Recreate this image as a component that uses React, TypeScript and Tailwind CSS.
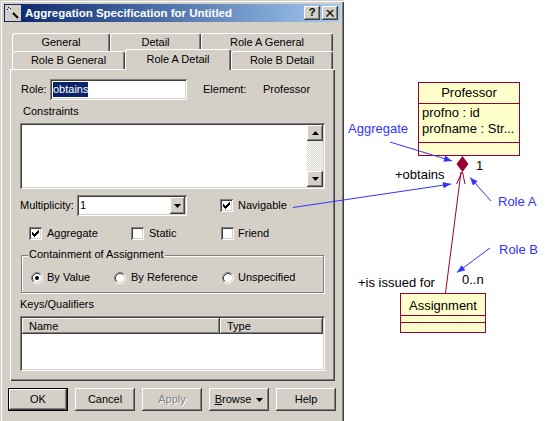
import React from "react";

const RAISED =
  "shadow-[inset_-1px_-1px_0_#404040,inset_1px_1px_0_#ffffff,inset_-2px_-2px_0_#808080,inset_2px_2px_0_#d4d0c8]";
const SUNKEN =
  "shadow-[inset_1px_1px_0_#808080,inset_-1px_-1px_0_#ffffff,inset_2px_2px_0_#404040,inset_-2px_-2px_0_#d4d0c8]";

function Check({ checked }: { checked?: boolean }) {
  return (
    <span
      className={`relative block w-[13px] h-[13px] shrink-0 bg-white ${SUNKEN}`}
    >
      {checked && (
        <svg className="absolute left-0 top-0" width="13" height="13" viewBox="0 0 13 13">
          <g fill="#000">
            <rect x="9" y="3" width="1" height="1" />
            <rect x="8" y="4" width="2" height="1" />
            <rect x="3" y="5" width="1" height="1" />
            <rect x="7" y="5" width="3" height="1" />
            <rect x="3" y="6" width="2" height="1" />
            <rect x="6" y="6" width="3" height="1" />
            <rect x="3" y="7" width="5" height="1" />
            <rect x="4" y="8" width="3" height="1" />
            <rect x="5" y="9" width="1" height="1" />
          </g>
        </svg>
      )}
    </span>
  );
}

function Radio({ checked }: { checked?: boolean }) {
  return (
    <svg className="shrink-0" width="12" height="12" viewBox="0 0 12 12">
      <circle cx="6" cy="6" r="4.5" fill="#fff" />
      <path d="M2.11 9.89 A5.5 5.5 0 0 1 9.89 2.11" stroke="#808080" fill="none" />
      <path d="M9.89 2.11 A5.5 5.5 0 0 1 2.11 9.89" stroke="#ffffff" fill="none" />
      <path d="M2.82 9.18 A4.5 4.5 0 0 1 9.18 2.82" stroke="#404040" fill="none" />
      <path d="M9.18 2.82 A4.5 4.5 0 0 1 2.82 9.18" stroke="#d4d0c8" fill="none" />
      {checked && <circle cx="6" cy="6" r="2" fill="#000" />}
    </svg>
  );
}

function Tri({ up }: { up?: boolean }) {
  return (
    <svg width="7" height="4" viewBox="0 0 7 4">
      {up ? <polygon points="0,4 7,4 3.5,0" fill="#000" /> : <polygon points="0,0 7,0 3.5,4" fill="#000" />}
    </svg>
  );
}

function Tab({ w, label }: { w: string; label: string }) {
  return (
    <div
      className={`${w} h-[18px] shrink-0 flex items-center justify-center rounded-t-[3px] border-t border-l border-white border-r border-r-[#404040] shadow-[inset_-1px_0_0_#808080] bg-[#d4d0c8]`}
    >
      {label}
    </div>
  );
}

function Btn({ children, def, w = "w-[60px]" }: { children: React.ReactNode; def?: boolean; w?: string }) {
  return (
    <div
      className={`${w} h-[23px] flex items-center justify-center ${RAISED} ${def ? "border border-black" : ""}`}
    >
      {children}
    </div>
  );
}

export default function App() {
  const blue = "#3333ff";
  const maroon = "#990033";
  const yellow = "#ffffcc";
  const diagFont = "'Liberation Sans', Arial, sans-serif";
  return (
    <div className="relative w-[557px] h-[421px] overflow-hidden bg-white font-['Liberation_Sans',Arial,sans-serif] text-[11px] leading-[13px] text-black">
      {/* Dialog */}
      <div className="w-[344px] h-[424px] bg-[#d4d0c8] px-[4px] pt-[4px] flex flex-col shadow-[inset_1px_1px_0_#d4d0c8,inset_2px_2px_0_#ffffff,inset_-1px_-1px_0_#404040,inset_-2px_-2px_0_#808080]">
        {/* Title bar */}
        <div className="h-[18px] flex items-center bg-gradient-to-r from-[#0a246a] to-[#a6caf0]">
          <svg className="ml-[1px]" width="16" height="16" viewBox="0 0 16 16">
            <rect x="0" y="0" width="16" height="16" fill="#d4d0c8" />
            <line x1="7" y1="7" x2="13" y2="13" stroke="#000" strokeWidth="2" />
            <line x1="6" y1="6" x2="8" y2="8" stroke="#fff" strokeWidth="1.5" />
            <rect x="3" y="2" width="1" height="1" fill="#000" />
            <rect x="2" y="4" width="1" height="1" fill="#000" />
            <rect x="5" y="3" width="1" height="1" fill="#000" />
            <rect x="4" y="5" width="1" height="1" fill="#fff" />
          </svg>
          <span className="ml-[4px] text-white font-bold text-[11.5px]">
            Aggregation Specification for Untitled
          </span>
          <div className="ml-auto mr-[2px] flex gap-[2px]">
            <div className={`w-[16px] h-[14px] flex items-center justify-center bg-[#d4d0c8] ${RAISED} font-bold text-[11px] leading-[11px] pb-[1px]`}>
              ?
            </div>
            <div className={`w-[16px] h-[14px] flex items-center justify-center bg-[#d4d0c8] ${RAISED}`}>
              <svg width="8" height="7" viewBox="0 0 8 7">
                <path d="M0.5 0 L7.5 7 M1.5 0 L8 6.5 M7.5 0 L0.5 7 M6.5 0 L0 6.5" stroke="#000" strokeWidth="1" fill="none" />
              </svg>
            </div>
          </div>
        </div>

        {/* Tabs */}
        <div className="mt-[11px] flex flex-col">
          <div className="ml-[8px] flex h-[18px]">
            <Tab w="w-[98px]" label="General" />
            <Tab w="w-[91px]" label="Detail" />
            <Tab w="w-[132px]" label="Role A General" />
          </div>
          <div className="ml-[8px] flex h-[18px] items-start">
            <Tab w="w-[113px]" label="Role B General" />
            <div className="relative z-10 w-[106px] h-[21px] -mt-[2px] shrink-0 flex justify-center pt-[3px] rounded-t-[3px] border-t border-l border-white border-r border-r-[#404040] shadow-[inset_-1px_0_0_#808080] bg-[#d4d0c8]">
              Role A Detail
            </div>
            <Tab w="w-[102px]" label="Role B Detail" />
          </div>
        </div>

        {/* Panel */}
        <div className="ml-[6px] w-[325px] h-[312px] shrink-0 flex flex-col shadow-[inset_1px_1px_0_#ffffff,inset_-1px_-1px_0_#404040,inset_-2px_-2px_0_#808080]">
          {/* Role row */}
          <div className="mt-[10px] h-[21px] flex items-center pl-[11px]">
            <span className="w-[29px]">Role:</span>
            <div className={`w-[137px] h-[21px] bg-white ${SUNKEN} flex items-center pl-[3px]`}>
              <span className="bg-[#0a246a] text-white h-[15px] leading-[15px]">obtains</span>
            </div>
            <span className="ml-[16px] w-[60px]">Element:</span>
            <span>Professor</span>
          </div>

          <div className="mt-[5px] pl-[13px]">Constraints</div>

          <div className={`mt-[5px] ml-[10px] w-[305px] h-[66px] shrink-0 bg-white ${SUNKEN} flex justify-end p-[2px]`}>
            <div className="w-[16px] flex flex-col">
              <div className={`h-[16px] flex items-center justify-center bg-[#d4d0c8] ${RAISED}`}>
                <Tri up />
              </div>
              <div className="flex-1 bg-[repeating-conic-gradient(#d4d0c8_0_25%,#ffffff_0_50%)] bg-[length:2px_2px]" />
              <div className={`h-[16px] flex items-center justify-center bg-[#d4d0c8] ${RAISED}`}>
                <Tri />
              </div>
            </div>
          </div>

          {/* Multiplicity row */}
          <div className="mt-[6px] h-[21px] flex items-center pl-[10px]">
            <span className="w-[57px]">Multiplicity:</span>
            <div className={`w-[110px] h-[21px] bg-white ${SUNKEN} flex items-center pl-[3px] pr-[2px]`}>
              <span className="flex-1">1</span>
              <div className={`w-[15px] h-[17px] flex items-center justify-center bg-[#d4d0c8] ${RAISED}`}>
                <Tri />
              </div>
            </div>
            <div className="ml-[33px] flex items-center gap-[5px]">
              <Check checked />
              <span>Navigable</span>
            </div>
          </div>

          {/* Checkbox row */}
          <div className="mt-[11px] h-[13px] flex items-center pl-[19px]">
            <div className="w-[102px] flex items-center gap-[5px]">
              <Check checked />
              <span>Aggregate</span>
            </div>
            <div className="w-[90px] flex items-center gap-[5px]">
              <Check />
              <span>Static</span>
            </div>
            <div className="flex items-center gap-[4px]">
              <Check />
              <span>Friend</span>
            </div>
          </div>

          {/* Group box */}
          <div className="relative mt-[15px] ml-[11px] w-[303px] h-[38px] shrink-0 border border-[#808080] shadow-[inset_1px_1px_0_#ffffff,1px_1px_0_#ffffff] pt-[15px] pl-[9px] flex items-start">
            <span className="absolute left-[6px] -top-[8px] px-[1px] bg-[#d4d0c8]">Containment of Assignment</span>
            <div className="w-[83px] flex items-center gap-[4px]">
              <Radio checked />
              <span>By Value</span>
            </div>
            <div className="w-[108px] flex items-center gap-[5px]">
              <Radio />
              <span>By Reference</span>
            </div>
            <div className="flex items-center gap-[4px]">
              <Radio />
              <span>Unspecified</span>
            </div>
          </div>

          <div className="mt-[5px] pl-[10px]">Keys/Qualifiers</div>

          <div className={`mt-[5px] ml-[10px] w-[305px] h-[55px] shrink-0 bg-white ${SUNKEN} p-[2px] flex flex-col`}>
            <div className="h-[16px] flex">
              <div className={`w-[198px] h-[16px] bg-[#d4d0c8] ${RAISED} pl-[7px] flex items-center`}>Name</div>
              <div className={`flex-1 h-[16px] bg-[#d4d0c8] ${RAISED} pl-[7px] flex items-center`}>Type</div>
            </div>
          </div>
        </div>

        {/* Buttons */}
        <div className="mt-[7px] ml-[4px] flex gap-[7px]">
          <Btn def>OK</Btn>
          <Btn>Cancel</Btn>
          <Btn>
            <span className="text-[#808080] [text-shadow:1px_1px_0_#ffffff]">Apply</span>
          </Btn>
          <Btn>
            <span className="flex items-center gap-[5px]">
              <span>
                <span className="underline">B</span>rowse
              </span>
              <Tri />
            </span>
          </Btn>
          <Btn>Help</Btn>
        </div>
      </div>

      {/* UML diagram & annotations (free canvas) */}
      <svg className="absolute left-0 top-0 pointer-events-none" width="557" height="421" viewBox="0 0 557 421">
        <defs>
          <marker id="ah" viewBox="0 0 10 10" refX="10" refY="5" markerWidth="9" markerHeight="8" orient="auto" markerUnits="userSpaceOnUse">
            <path d="M0 1 L10 5 L0 9 z" fill={blue} />
          </marker>
        </defs>

        {/* Professor class */}
        <rect x="418.5" y="82.5" width="101" height="73" fill={yellow} stroke={maroon} />
        <line x1="418.5" y1="103.5" x2="519.5" y2="103.5" stroke={maroon} />
        <line x1="418.5" y1="142.5" x2="519.5" y2="142.5" stroke={maroon} />
        <text x="469" y="97" textAnchor="middle" fontFamily={diagFont} fontSize="13" fill="#000">Professor</text>
        <text x="422" y="117" fontFamily={diagFont} fontSize="13" fill="#000">profno : id</text>
        <text x="422" y="133" fontFamily={diagFont} fontSize="13" fill="#000">profname : Str...</text>

        {/* Aggregation diamond */}
        <polygon points="462.5,156 468.5,164 462.5,172 456.5,164" fill={maroon} />
        <line x1="461" y1="172" x2="445.5" y2="293" stroke={maroon} />
        <line x1="462" y1="172" x2="456.5" y2="184" stroke={maroon} />
        <line x1="462.5" y1="172" x2="465" y2="184" stroke={maroon} />
        <text x="476" y="170" fontFamily={diagFont} fontSize="13" fill="#000">1</text>
        <text x="395" y="179" fontFamily={diagFont} fontSize="13" fill="#000">+obtains</text>

        {/* Assignment class */}
        <rect x="400.5" y="293.5" width="85" height="39" fill={yellow} stroke={maroon} />
        <line x1="400.5" y1="315.5" x2="485.5" y2="315.5" stroke={maroon} />
        <line x1="400.5" y1="322.5" x2="485.5" y2="322.5" stroke={maroon} />
        <text x="443" y="310" textAnchor="middle" fontFamily={diagFont} fontSize="13" fill="#000">Assignment</text>
        <text x="358" y="287" fontFamily={diagFont} fontSize="13" fill="#000">+is issued for</text>
        <text x="462" y="284" fontFamily={diagFont} fontSize="13" fill="#000">0..n</text>

        {/* Annotations */}
        <text x="348" y="133" fontFamily={diagFont} fontSize="13" fill={blue}>Aggregate</text>
        <text x="498" y="206" fontFamily={diagFont} fontSize="13" fill={blue}>Role A</text>
        <text x="499" y="254" fontFamily={diagFont} fontSize="13" fill={blue}>Role B</text>
        <line x1="390" y1="142" x2="452" y2="161" stroke={blue} markerEnd="url(#ah)" />
        <line x1="491" y1="201" x2="470" y2="177.5" stroke={blue} markerEnd="url(#ah)" />
        <line x1="490" y1="248" x2="457" y2="272.5" stroke={blue} markerEnd="url(#ah)" />
        <line x1="293" y1="207.5" x2="451" y2="184" stroke={blue} markerEnd="url(#ah)" />
      </svg>
    </div>
  );
}
